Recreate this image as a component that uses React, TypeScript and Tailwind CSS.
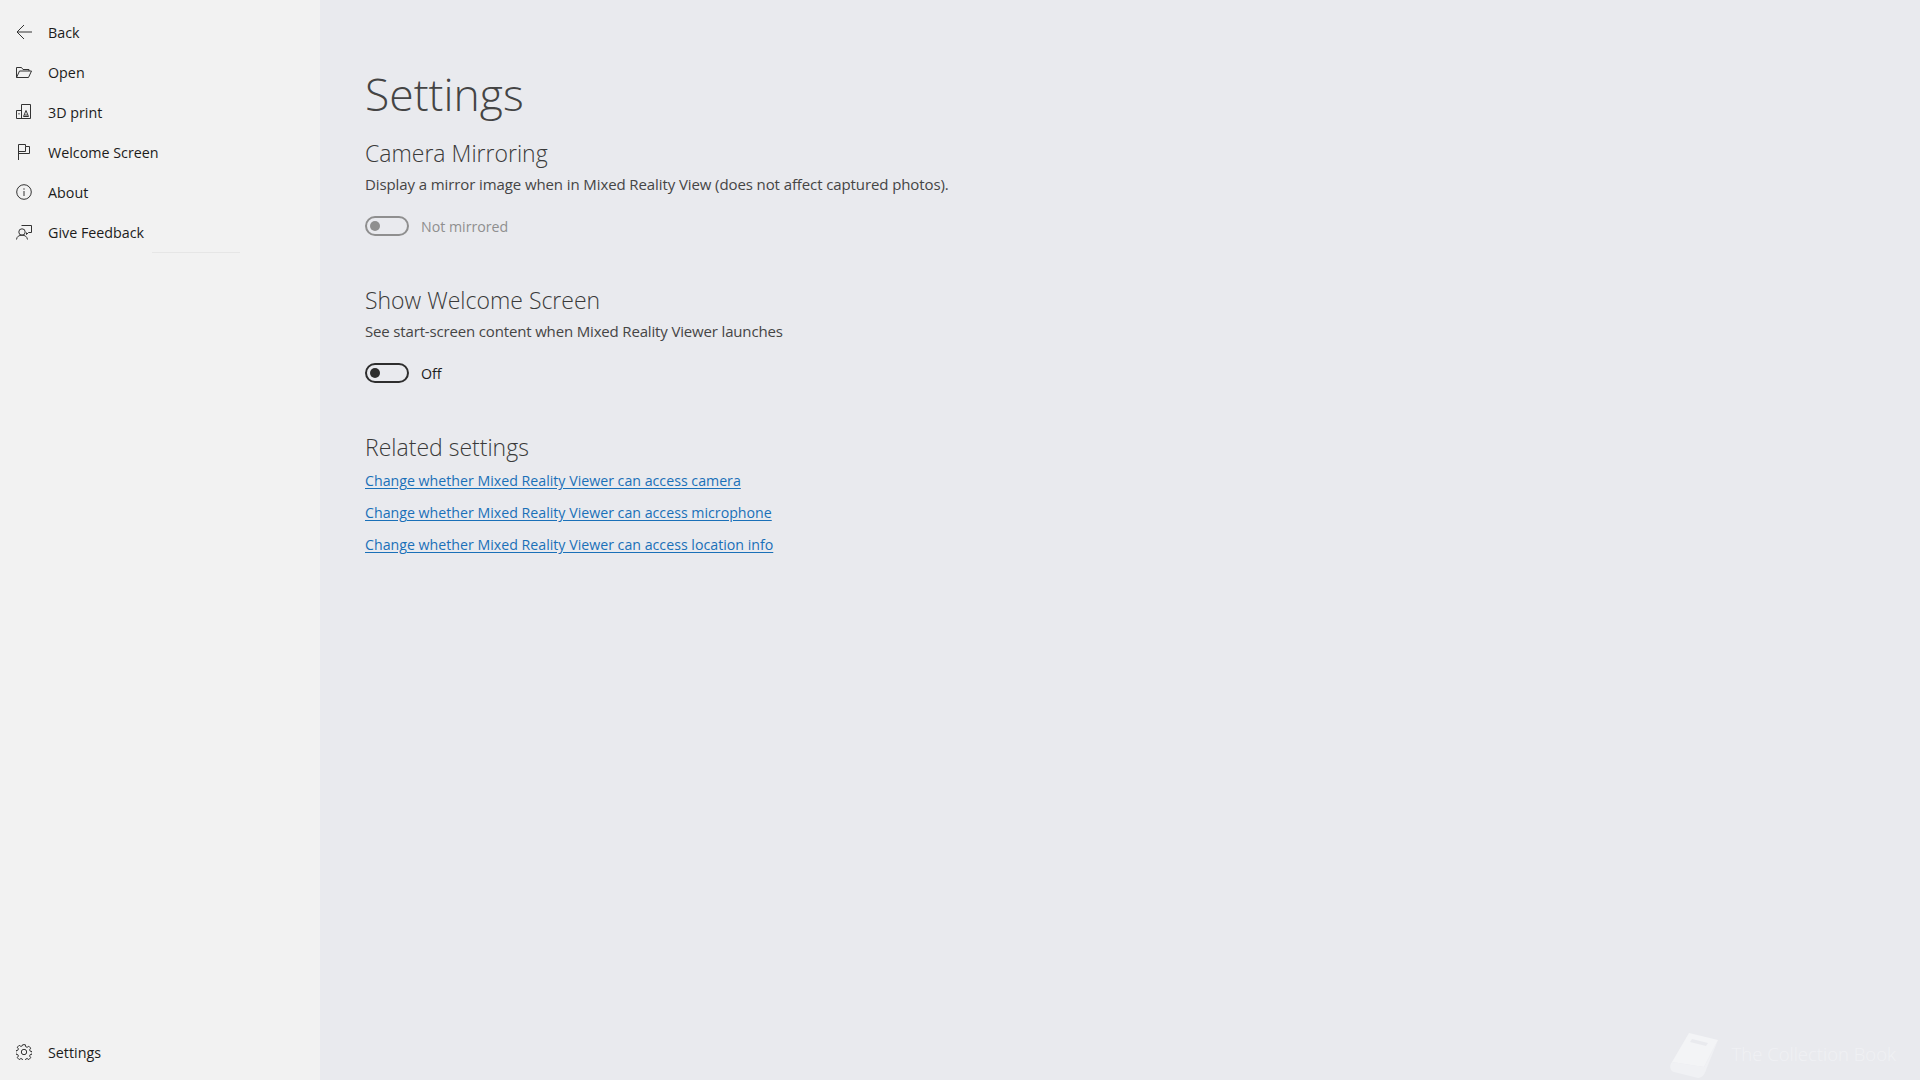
const fontClass = "font-['Open_Sans','Noto_Sans',sans-serif]";

const navItems = [
  { label: "Back", icon: <BackIcon /> },
  { label: "Open", icon: <OpenIcon /> },
  { label: "3D print", icon: <PrintIcon /> },
  { label: "Welcome Screen", icon: <FlagIcon /> },
  { label: "About", icon: <InfoIcon /> },
  { label: "Give Feedback", icon: <FeedbackIcon /> },
];

const links = [
  "Change whether Mixed Reality Viewer can access camera",
  "Change whether Mixed Reality Viewer can access microphone",
  "Change whether Mixed Reality Viewer can access location info",
];

function Svg({ children }: { children: React.ReactNode }) {
  return (
    <svg width="16" height="16" viewBox="0 0 16 16" fill="none" stroke="currentColor" strokeWidth="1" className="shrink-0 text-[#333]">
      {children}
    </svg>
  );
}

function BackIcon() {
  return (
    <Svg>
      <path d="M16 8H1M8 1L1 8l7 7" />
    </Svg>
  );
}

function OpenIcon() {
  return (
    <Svg>
      <path d="M.5 13.500v-10h5l1.500 2h6v1.500M.5 13.500h12l3-6.500h-12l-3 6.500z" />
    </Svg>
  );
}

function PrintIcon() {
  return (
    <Svg>
      <path d="M.5 6.500h5M.5 6.500v8h14v-14h-9v14" />
      <path d="M7.500 12.500l2.500-6 2.500 6zM8.500 11h3M3 9v1.500" />
    </Svg>
  );
}

function FlagIcon() {
  return (
    <Svg>
      <path d="M2.500 16V.5h7v2h4v7h-11M9.500 2.500v5h-7" />
    </Svg>
  );
}

function InfoIcon() {
  return (
    <Svg>
      <circle cx="8" cy="8" r="7.300" />
      <path d="M8 7v5M8 4.300v1.400" />
    </Svg>
  );
}

function FeedbackIcon() {
  return (
    <Svg>
      <path d="M5.500 1.500h10v7h-3l-2 2v-2" />
      <circle cx="6" cy="8" r="3.200" />
      <path d="M.5 15.500c.3-3 2.500-4.300 5.500-4.300s5 1.300 5.500 4.300" />
    </Svg>
  );
}

function GearIcon() {
  return (
    <Svg>
      <circle cx="8" cy="8" r="2.700" />
      <path d="M6.700.7h2.600l.4 2 1.400.6 1.700-1.100 1.900 1.900-1.100 1.700.6 1.400 2 .4v2.600l-2 .4-.6 1.400 1.100 1.700-1.900 1.900-1.700-1.100-1.400.6-.4 2H6.700l-.4-2-1.400-.6-1.700 1.100-1.900-1.900 1.100-1.700-.6-1.400-2-.4V6.700l2-.4.6-1.400-1.100-1.700 1.900-1.900 1.700 1.100 1.400-.6z" />
    </Svg>
  );
}

function NavRow({ label, icon }: { label: string; icon: React.ReactNode }) {
  return (
    <div className="flex h-10 items-center gap-4 pl-4 text-[14.3px] text-[#1c1c1c]">
      {icon}
      <span className="pt-px">{label}</span>
    </div>
  );
}

function Toggle({ label, disabled }: { label: string; disabled?: boolean }) {
  return (
    <div className="mt-[22px] flex h-5 items-center gap-3 text-[14.2px]">
      <div
        className={`flex h-5 w-11 items-center rounded-full border-2 pl-[3px] ${
          disabled ? "border-[#8f8f8f]" : "border-[#2e2e2e]"
        }`}
      >
        <div className={`size-2.5 rounded-full ${disabled ? "bg-[#8f8f8f]" : "bg-[#2e2e2e]"}`} />
      </div>
      <span className={`pt-px ${disabled ? "text-[#8f8f8f]" : "text-[#1c1c1c]"}`}>{label}</span>
    </div>
  );
}

function Section({
  title,
  description,
  descriptionClass,
  toggle,
  disabled,
}: {
  title: string;
  description: string;
  descriptionClass: string;
  toggle: string;
  disabled?: boolean;
}) {
  return (
    <section className="mb-[48px]">
      <h2 className="text-[23px] leading-[32px] font-light text-[#3a3a3a]">{title}</h2>
      <p className={`mt-[5px] text-[15px] leading-5 text-[#454545] ${descriptionClass}`}>{description}</p>
      <Toggle label={toggle} disabled={disabled} />
    </section>
  );
}

export default function App() {
  return (
    <div className={`relative flex h-[1080px] w-[1920px] overflow-hidden bg-[#e9eaee] ${fontClass}`}>
      <aside className="flex w-[320px] shrink-0 flex-col justify-between bg-[#f2f2f2] pt-3 pb-2">
        <nav>
          {navItems.map((item) => (
            <NavRow key={item.label} label={item.label} icon={item.icon} />
          ))}
          <div className="ml-[152px] h-px w-[88px] bg-[#e6e6e6]" />
        </nav>
        <NavRow label="Settings" icon={<GearIcon />} />
      </aside>

      <main className="flex-1 pt-[62px] pl-[45px]">
        <h1 className="mb-[11px] text-[44.5px] leading-[64px] font-light text-[#444]">Settings</h1>
        <Section
          title="Camera Mirroring"
          description="Display a mirror image when in Mixed Reality View (does not affect captured photos)."
          descriptionClass="tracking-[-0.1px]"
          toggle="Not mirrored"
          disabled
        />
        <Section
          title="Show Welcome Screen"
          description="See start-screen content when Mixed Reality Viewer launches"
          descriptionClass="tracking-[-0.16px]"
          toggle="Off"
        />
        <h2 className="text-[23px] leading-[32px] font-light text-[#3a3a3a]">Related settings</h2>
        <div className="mt-2 flex flex-col gap-3">
          {links.map((link) => (
            <a key={link} className="text-[14.2px] leading-5 text-[#1a70b8] underline underline-offset-2">
              {link}
            </a>
          ))}
        </div>
      </main>

      <div className="absolute right-6 bottom-0 flex items-center gap-3 text-[18.5px] font-light text-[#f0f1f4]">
        <svg width="52" height="50" viewBox="0 0 52 50">
          <path d="M21 3l29 7-14 27-32-5z" fill="#f3f4f6" />
          <path d="M4 32l32 5 14-27-12 30c-1 4-4 8-8 8L6 42c-4-1-5-7-2-10z" fill="#f0f1f4" />
          <path d="M24 9l16 4-2 3-16-4z" fill="#e9eaee" />
        </svg>
        <span className="mb-[3px]">The Collection Book</span>
      </div>
    </div>
  );
}
